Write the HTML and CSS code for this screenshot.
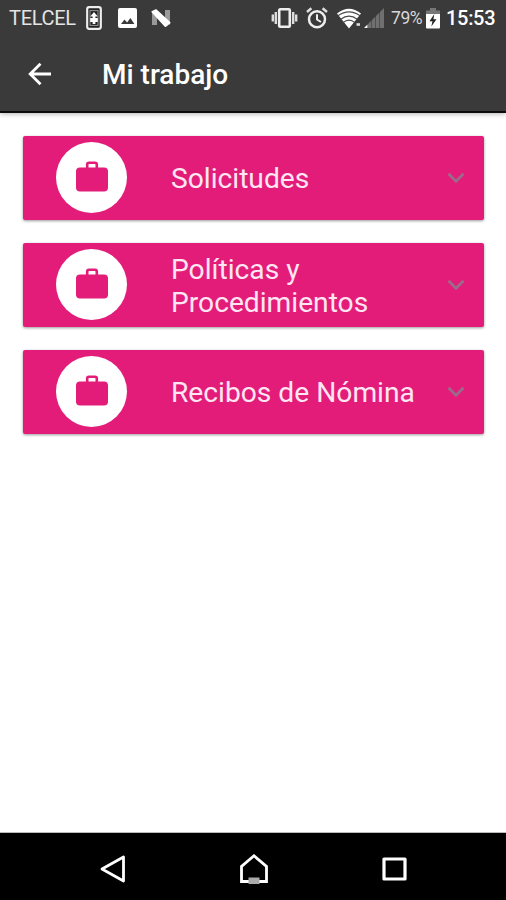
FILE: index.html
```
<!DOCTYPE html>
<html lang="es">

<head>
    <meta charset="UTF-8" />
    <meta name="viewport" content="width=device-width, initial-scale=1.0" />
    <title>Mi trabajo</title>
    <link rel="stylesheet" href="styles.css">
</head>

<body>
    <header class="header">
        <div class="status-bar">
            <div class="status-left">
                <span class="carrier">TELCEL</span>
                <svg class="icon-sync" width="16" height="24" viewBox="0 0 16 24">
                    <rect x="1.2" y="1.2" width="13.6" height="21.6" rx="2" fill="#222" stroke="#eee" stroke-width="2.2" />
                    <rect x="4" y="4.6" width="8" height="14.8" fill="none" stroke="#999" />
                    <path d="M8 6l3.8 4.5H9.4v1.6h2.4v4H9.4V18H6.6v-1.9H4.2v-4h2.4v-1.6H4.2z" fill="#fff" />
                </svg>
                <svg class="icon-image" width="19" height="20" viewBox="0 0 19 20">
                    <rect width="19" height="20" rx="2" fill="#fff" />
                    <path d="M3 16l3.5-4.6 2.6 3 3.3-4.4 4 6z" fill="#3a3a3a" />
                </svg>
                <svg class="icon-n" width="20" height="18" viewBox="0 0 20 18">
                    <path d="M1 2v14h5V5zM14 1h5v15l-5-4z" fill="#999" />
                    <path d="M1.5 2.8L5 1.2l13.5 12.6L14.5 17z" fill="#fff" stroke="#fff" stroke-width="2" stroke-linejoin="round" />
                </svg>
            </div>
            <div class="status-right">
                <svg class="icon-vibrate" width="27" height="20" viewBox="0 0 27 20">
                    <rect x="8.2" y="1.3" width="10.6" height="17.4" rx="1" fill="none" stroke="#eee" stroke-width="2.6" />
                    <path d="M4.8 4v12M22.2 4v12M1.8 6.5v7M25.2 6.5v7" stroke="#ddd" stroke-width="2.4" />
                </svg>
                <svg class="icon-alarm" width="22" height="22" viewBox="0 0 22 22">
                    <circle cx="11" cy="12.2" r="8" fill="none" stroke="#eee" stroke-width="2.5" />
                    <path d="M11 7.2v5.3l4 2.5" fill="none" stroke="#eee" stroke-width="2" />
                    <path d="M1 5l4.4-3.8M21 5l-4.4-3.8" stroke="#ddd" stroke-width="2.5" />
                </svg>
                <svg class="icon-wifi" width="26" height="21" viewBox="0 0 26 21">
                    <path d="M0 5.5Q12 -4 24 5.5L12 20.5z" fill="#fff" />
                    <path d="M1 7.8Q12 0 23 7.8M3.5 11.4Q12 5 20.5 11.4M6 14.6Q12 9.8 18 14.6" fill="none" stroke="#4a4a4a" stroke-width="1.2" />
                    <path d="M19.5 16.5h3.5" stroke="#ddd" stroke-width="2.6" />
                </svg>
                <svg class="icon-signal" width="20" height="20" viewBox="0 0 20 20">
                    <path d="M0 20l3.5-3.5V20z" fill="#fff" />
                    <path d="M4 20v-4l3.4-3.4V20zM8 20v-8l3.4-3.4V20zM12 20V8l3.4-3.4V20zM16 20V4l4-4v20z" fill="#707070" />
                </svg>
                <span class="battery-level">79%</span>
                <svg class="icon-battery" width="14" height="21" viewBox="0 0 14 21">
                    <path d="M4 0h6v2.5h4V7H0V2.5h4z" fill="#777" />
                    <path d="M0 6h14v13.5q0 1-1 1H1q-1 0-1-1z" fill="#fff" />
                    <path d="M8.3 6L3.5 13.2h3L5.3 18.5l5.2-7.3H7.4z" fill="#222" />
                </svg>
                <span class="clock">15:53</span>
            </div>
        </div>
        <div class="toolbar">
            <svg class="back" width="24" height="24" viewBox="0 0 24 24">
                <path d="M23 12H2.5M12.5 1.8L2.2 12l10.3 10.2" fill="none" stroke="#fff" stroke-width="2.8" />
            </svg>
            <h1 class="title">Mi trabajo</h1>
        </div>
    </header>

    <main class="content">
        <div class="card">
            <div class="avatar">
                <svg width="32" height="31" viewBox="0 0 32 31">
                    <path d="M11.2 7V3.6q0-1.8 1.8-1.8h6q1.8 0 1.8 1.8V7" fill="none" stroke="#e31c79" stroke-width="2.6" />
                    <rect y="6.5" width="32" height="24" rx="4" fill="#e31c79" />
                </svg>
            </div>
            <span class="label">Solicitudes</span>
            <svg class="chevron" width="18" height="12" viewBox="0 0 18 12">
                <path d="M1.5 1.8L9 9.3l7.5-7.5" fill="none" stroke="#9c6a8a" stroke-width="2.8" />
            </svg>
        </div>
        <div class="card">
            <div class="avatar">
                <svg width="32" height="31" viewBox="0 0 32 31">
                    <path d="M11.2 7V3.6q0-1.8 1.8-1.8h6q1.8 0 1.8 1.8V7" fill="none" stroke="#e31c79" stroke-width="2.6" />
                    <rect y="6.5" width="32" height="24" rx="4" fill="#e31c79" />
                </svg>
            </div>
            <span class="label">Políticas y Procedimientos</span>
            <svg class="chevron" width="18" height="12" viewBox="0 0 18 12">
                <path d="M1.5 1.8L9 9.3l7.5-7.5" fill="none" stroke="#9c6a8a" stroke-width="2.8" />
            </svg>
        </div>
        <div class="card">
            <div class="avatar">
                <svg width="32" height="31" viewBox="0 0 32 31">
                    <path d="M11.2 7V3.6q0-1.8 1.8-1.8h6q1.8 0 1.8 1.8V7" fill="none" stroke="#e31c79" stroke-width="2.6" />
                    <rect y="6.5" width="32" height="24" rx="4" fill="#e31c79" />
                </svg>
            </div>
            <span class="label">Recibos de Nómina</span>
            <svg class="chevron" width="18" height="12" viewBox="0 0 18 12">
                <path d="M1.5 1.8L9 9.3l7.5-7.5" fill="none" stroke="#9c6a8a" stroke-width="2.8" />
            </svg>
        </div>
    </main>

    <nav class="nav-bar">
        <svg width="26" height="28" viewBox="0 0 26 28">
            <path d="M23.5 2v24L2 14z" fill="none" stroke="#fff" stroke-width="2.8" stroke-linejoin="round" />
        </svg>
        <svg width="28" height="30" viewBox="0 0 28 30">
            <path d="M1.5 27.5V12.5L14 1.8l12.5 10.7v15z" fill="none" stroke="#fff" stroke-width="2.8" />
            <rect x="8.5" y="23.5" width="11" height="6.5" fill="#aaa" />
        </svg>
        <svg width="25" height="24" viewBox="0 0 25 24">
            <rect x="2" y="2" width="21" height="20" fill="none" stroke="#fff" stroke-width="3.2" stroke-linejoin="round" />
        </svg>
    </nav>
</body>

</html>
```
FILE: styles.css
```
* {
    box-sizing: border-box;
}

html,
body {
    margin: 0;
    height: 100%;
}

body {
    display: flex;
    flex-direction: column;
    font-family: Roboto, sans-serif;
    background-color: #fff;
    color: #fff;
    overflow: hidden;
}

svg {
    display: block;
    flex-shrink: 0;
}

/* Header */
.header {
    height: 113px;
    background-color: #3a3a3a;
    border-bottom: 2px solid #0c0c0c;
    box-shadow: 0 1px 5px rgba(0, 0, 0, 0.3);
}

.status-bar {
    display: flex;
    justify-content: space-between;
    height: 36px;
    padding: 0 10px 0 9px;
}

.status-left,
.status-right {
    display: flex;
    align-items: center;
    height: 36px;
}

.carrier {
    width: 77px;
    font-size: 20px;
    color: #e4e4e4;
    letter-spacing: -0.3px;
}

.icon-image {
    margin-left: 16px;
}

.icon-n {
    margin-left: 14px;
}

.icon-alarm {
    margin-left: 8px;
}

.icon-wifi {
    margin-left: 9px;
}

.icon-signal {
    margin-left: 1px;
}

.battery-level {
    width: 35px;
    margin-left: 7px;
    font-size: 17.5px;
    color: #d8d8d8;
    letter-spacing: -0.4px;
}

.clock {
    margin-left: 6px;
    font-size: 20px;
    font-weight: 500;
    letter-spacing: -0.3px;
    width: 50px;
}

.toolbar {
    display: flex;
    align-items: center;
    height: 76px;
    padding-left: 28px;
}

.title {
    margin: 0 0 0 50px;
    font-size: 28px;
    font-weight: 500;
}

/* Cards */
.content {
    flex: 1;
    display: flex;
    flex-direction: column;
    gap: 23px;
    padding: 22.5px 22px 0 23px;
}

.card {
    display: flex;
    align-items: center;
    height: 84px;
    padding: 0 19px 0 33px;
    background-color: #e31c79;
    border-radius: 2px;
    box-shadow: 0 1px 3px rgba(0, 0, 0, 0.4);
}

.avatar {
    display: flex;
    align-items: center;
    justify-content: center;
    flex-shrink: 0;
    width: 71px;
    height: 71px;
    padding-bottom: 2px;
    border-radius: 50%;
    background-color: #fff;
}

.label {
    flex: 1;
    margin: 2px 10px 0 44px;
    font-size: 28.2px;
    line-height: 33px;
    color: #ffe6f2;
}

.chevron {
    margin-top: 1px;
}

/* Android navigation */
.nav-bar {
    display: flex;
    align-items: center;
    justify-content: space-between;
    height: 68px;
    padding: 5px 99px 0 100px;
    background-color: #000;
    border-top: 1px solid #bbb;
}
```
